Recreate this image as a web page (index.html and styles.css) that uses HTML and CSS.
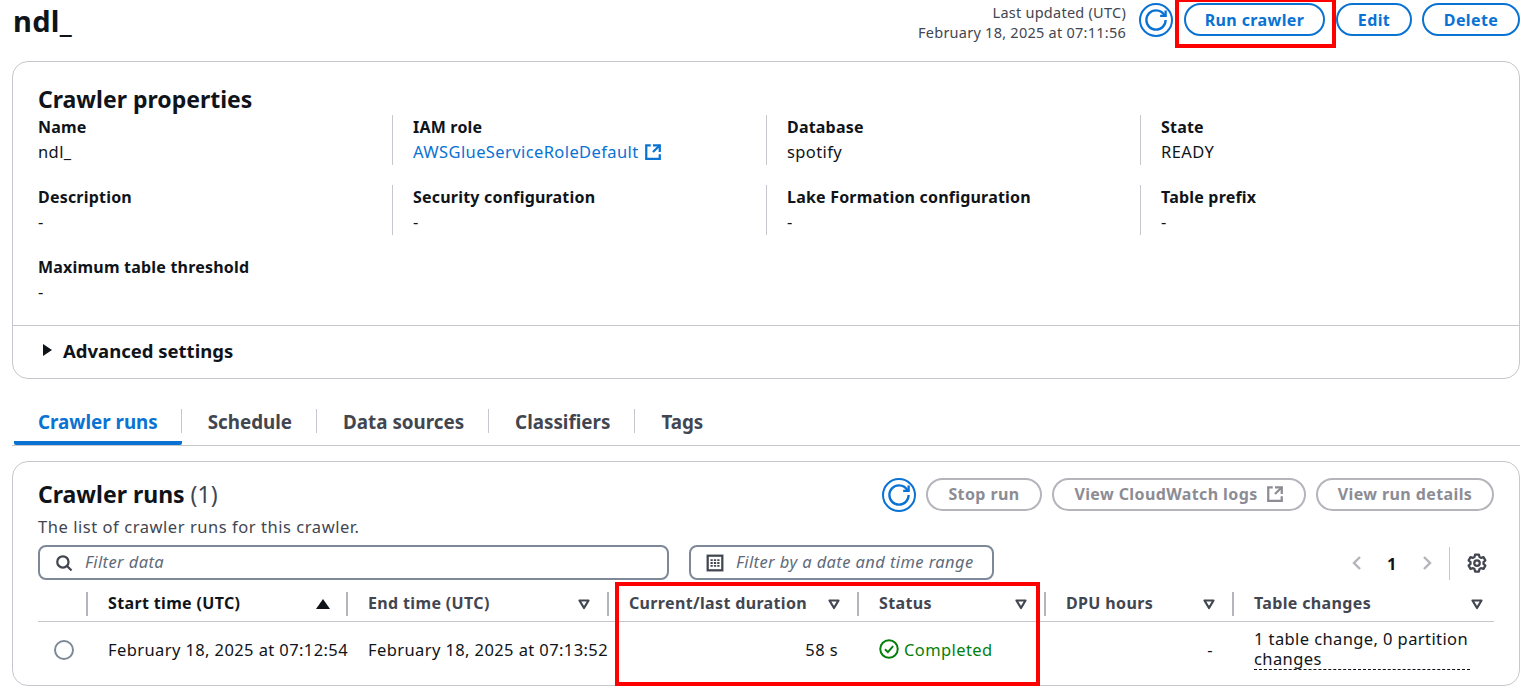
FILE: index.html
```html
<!DOCTYPE html>
<html lang="en">
<head>
<meta charset="UTF-8">
<meta name="viewport" content="width=device-width, initial-scale=1.0">
<link rel="stylesheet" href="styles.css">
<title>ndl_</title>
</head>
<body>
<svg class="sprites" width="0" height="0">
  <symbol id="i-refresh" viewBox="0 0 16 16"><path d="M15 8c0 3.87-3.13 7-7 7s-7-3.13-7-7 3.13-7 7-7c2.79 0 5.2 1.63 6.33 4"/><path d="M15 1v4h-4"/></symbol>
  <symbol id="i-external" viewBox="0 0 16 16"><path d="M14 8.01v-6H8"/><path d="M14.07 2 8 8"/><path d="M6 2.01H2v12h12v-3.99"/></symbol>
  <symbol id="i-filter" viewBox="0 0 16 16"><path d="M3.5 4.5h9L8 12z" stroke-linejoin="round"/></symbol>
</svg>

<header class="page-head">
  <h1 class="page-title">ndl_</h1>
  <div class="page-actions">
    <div class="updated">Last updated (UTC)<br>February 18, 2025 at 07:11:56</div>
    <button class="icon-btn"><svg class="ico"><use href="#i-refresh"/></svg></button>
    <button class="btn btn-run">Run crawler</button>
    <button class="btn btn-edit">Edit</button>
    <button class="btn btn-delete">Delete</button>
  </div>
</header>

<section class="card props">
  <h2 class="card-title">Crawler properties</h2>
  <div class="prop-grid">
    <div class="prop"><div class="prop-label">Name</div><div>ndl_</div></div>
    <div class="prop"><div class="prop-label">IAM role</div><div><a class="link">AWSGlueServiceRoleDefault</a><svg class="ico ico-ext"><use href="#i-external"/></svg></div></div>
    <div class="prop"><div class="prop-label">Database</div><div>spotify</div></div>
    <div class="prop"><div class="prop-label">State</div><div>READY</div></div>
    <div class="prop"><div class="prop-label">Description</div><div>-</div></div>
    <div class="prop"><div class="prop-label">Security configuration</div><div>-</div></div>
    <div class="prop"><div class="prop-label">Lake Formation configuration</div><div>-</div></div>
    <div class="prop"><div class="prop-label">Table prefix</div><div>-</div></div>
    <div class="prop"><div class="prop-label">Maximum table threshold</div><div>-</div></div>
  </div>
  <div class="advanced"><span class="caret"></span>Advanced settings</div>
</section>

<nav class="tabs">
  <div class="tab active">Crawler runs</div>
  <div class="tab">Schedule</div>
  <div class="tab">Data sources</div>
  <div class="tab">Classifiers</div>
  <div class="tab last">Tags</div>
</nav>

<section class="card runs">
  <div class="runs-head">
    <div>
      <h2 class="card-title">Crawler runs <span class="count">(1)</span></h2>
      <p class="runs-desc">The list of crawler runs for this crawler.</p>
    </div>
    <div class="runs-actions">
      <button class="icon-btn"><svg class="ico"><use href="#i-refresh"/></svg></button>
      <button class="btn btn-off btn-stop">Stop run</button>
      <button class="btn btn-off btn-logs">View CloudWatch logs<svg class="ico ico-off"><use href="#i-external"/></svg></button>
      <button class="btn btn-off btn-details">View run details</button>
    </div>
  </div>
  <div class="filters">
    <div class="filter filter-text">
      <svg class="ico ico-gray" viewBox="0 0 16 16"><circle cx="7" cy="7" r="5"/><path d="m10.7 10.7 4 4"/></svg>
      <span>Filter data</span>
    </div>
    <div class="filter filter-date">
      <svg class="ico ico-gray" viewBox="0 0 16 16"><rect x="1.5" y="1.5" width="13" height="13"/><path d="M4 5.5h2M7 5.5h2M10 5.5h2M4 8h2M7 8h2M10 8h2M4 10.5h2M7 10.5h2M10 10.5h2" stroke-width="1.6"/></svg>
      <span>Filter by a date and time range</span>
    </div>
    <div class="pager">
      <svg class="ico ico-pale" viewBox="0 0 16 16"><path d="m11 2-6 6 6 6"/></svg>
      <span class="page-num">1</span>
      <svg class="ico ico-pale" viewBox="0 0 16 16"><path d="m5 2 6 6-6 6"/></svg>
      <span class="pager-sep"></span>
      <svg class="ico ico-gear" viewBox="0 0 16 16"><path d="M6.5 1.2h3l.5 2 1.2.7 2-.6 1.5 2.6-1.5 1.4v1.4l1.5 1.4-1.5 2.6-2-.6-1.2.7-.5 2h-3l-.5-2-1.2-.7-2 .6-1.5-2.6 1.5-1.4V7.3L1.3 5.9l1.5-2.6 2 .6L6 3.2z" stroke-linejoin="round"/><circle cx="8" cy="8" r="2.2"/></svg>
    </div>
  </div>
  <table class="runs-table">
    <thead>
      <tr>
        <th class="col-radio"><span class="th-in"></span></th>
        <th class="col-start"><span class="th-in sorted">Start time (UTC)<span class="sort-up"></span></span></th>
        <th class="col-end"><span class="th-in">End time (UTC)<svg class="ico ico-filter"><use href="#i-filter"/></svg></span></th>
        <th class="col-dur"><span class="th-in">Current/last duration<svg class="ico ico-filter"><use href="#i-filter"/></svg></span></th>
        <th class="col-status"><span class="th-in">Status<svg class="ico ico-filter"><use href="#i-filter"/></svg></span></th>
        <th class="col-dpu"><span class="th-in">DPU hours<svg class="ico ico-filter"><use href="#i-filter"/></svg></span></th>
        <th class="col-changes"><span class="th-in">Table changes<svg class="ico ico-filter"><use href="#i-filter"/></svg></span></th>
      </tr>
    </thead>
    <tbody>
      <tr>
        <td><span class="radio"></span></td>
        <td class="nowrap">February 18, 2025 at 07:12:54</td>
        <td class="nowrap">February 18, 2025 at 07:13:52</td>
        <td class="right">58 s</td>
        <td><span class="status"><svg class="ico ico-ok" viewBox="0 0 16 16"><circle cx="8" cy="8" r="7"/><path d="m4.8 8.2 2.3 2.3 4.2-4.8"/></svg>Completed</span></td>
        <td class="right">-</td>
        <td><span class="changes">1 table change, 0 partition changes</span></td>
      </tr>
    </tbody>
  </table>
</section>

<div class="mark mark-run"></div>
<div class="mark mark-cols"></div>
</body>
</html>
```

FILE: styles.css
```css
* {
  box-sizing: border-box;
}
html, body {
  height: 686px;
  overflow: hidden;
}
body {
  margin: 0;
  padding: 0 8px 0 12px;
  position: relative;
  background: #fff;
  color: #0f141a;
  font-family: "Noto Sans", Arial, sans-serif;
  font-size: 16.5px;
  letter-spacing: .4px;
  line-height: 25px;
}
.sprites {
  position: absolute;
}
.ico {
  width: 16px;
  height: 16px;
  fill: none;
  stroke: currentColor;
  stroke-width: 2;
  flex: none;
}

/* page header */
.page-head {
  display: flex;
  justify-content: space-between;
  height: 61px;
}
.page-title {
  margin: 0;
  padding: 1px 0 0 1px;
  font-size: 29px;
  letter-spacing: .3px;
  line-height: 40px;
  font-weight: 700;
}
.page-actions {
  display: flex;
  align-items: flex-start;
  padding-top: 3px;
}
.updated {
  margin-top: -3px;
  padding-top: 2px;
  margin-right: 13px;
  text-align: right;
  font-size: 14.5px;
  letter-spacing: .25px;
  line-height: 20px;
  color: #424650;
}
.btn {
  height: 33px;
  padding: 0 20px;
  display: inline-flex;
  align-items: center;
  justify-content: center;
  border: 2px solid #0972d3;
  border-radius: 20px;
  background: #fff;
  color: #0972d3;
  font: 700 16px "Noto Sans", Arial, sans-serif;
  letter-spacing: .4px;
  white-space: nowrap;
}
.icon-btn {
  width: 34px;
  height: 34px;
  padding: 0;
  display: inline-flex;
  align-items: center;
  justify-content: center;
  border: 2px solid #0972d3;
  border-radius: 50%;
  background: #fff;
  color: #0972d3;
}
.icon-btn .ico {
  width: 22px;
  height: 22px;
  stroke-width: 1.7;
}
.btn-run {
  width: 141px;
  margin-left: 11px;
}
.btn-edit {
  width: 76px;
  margin-left: 11px;
}
.btn-delete {
  width: 98px;
  margin-left: 10px;
}

/* cards */
.card {
  border: 1px solid #c6c6cd;
  border-radius: 16px;
  background: #fff;
}
.card-title {
  margin: 0;
  font-size: 23px;
  letter-spacing: 0;
  line-height: 30px;
  font-weight: 700;
}
.props {
  height: 318px;
  padding-top: 22px;
}
.props .card-title {
  margin-bottom: 1px;
  padding-left: 25px;
}
.prop-grid {
  display: grid;
  grid-template-columns: repeat(4, 374px);
  grid-auto-rows: 50px;
  row-gap: 20px;
  height: 210px;
  padding-left: 5px;
}
.prop {
  padding-left: 20px;
  border-left: 1px solid #c6c6cd;
}
.prop:nth-child(4n+1) {
  border-left: 0;
}
.prop-label {
  margin-bottom: -1px;
  font-size: 16px;
  font-weight: 700;
  letter-spacing: .2px;
}
.link {
  color: #0972d3;
}
.ico-ext {
  width: 18px;
  height: 18px;
  margin-left: 5px;
  vertical-align: -3px;
  color: #0972d3;
}
.advanced {
  display: flex;
  align-items: center;
  height: 53px;
  padding: 0 0 4px 30px;
  border-top: 1px solid #c6c6cd;
  font-size: 18.5px;
  letter-spacing: 0;
  font-weight: 700;
}
.caret {
  width: 0;
  height: 0;
  margin-right: 11px;
  border-left: 9px solid #0f141a;
  border-top: 6px solid transparent;
  border-bottom: 6px solid transparent;
}

/* tabs */
.tabs {
  display: flex;
  align-items: flex-start;
  height: 67px;
  padding: 21px 0 0 2px;
  border-bottom: 1px solid #c6c6cd;
  margin-bottom: 15px;
}
.tab {
  position: relative;
  height: 45px;
  padding: 10px 25px 0 26px;
  color: #424650;
  font-size: 18.8px;
  letter-spacing: 0;
  font-weight: 700;
  line-height: 25px;
}
.tab::after {
  content: "";
  position: absolute;
  right: 0;
  top: 9px;
  height: 24px;
  border-right: 1px solid #c6c6cd;
}
.tab.last::after {
  display: none;
}
.tab.active {
  padding-left: 24px;
  padding-right: 24px;
  color: #0972d3;
  border-bottom: 4px solid #0972d3;
  border-radius: 2px;
}

/* crawler runs */
.runs {
  height: 225px;
  padding: 16px 25px 0;
  overflow: hidden;
}
.runs-head {
  display: flex;
  justify-content: space-between;
  height: 67px;
}
.runs .card-title {
  padding-top: 1px;
}
.count {
  font-weight: 400;
  color: #424650;
}
.runs-desc {
  margin: 5px 0 0;
  color: #424650;
  letter-spacing: .55px;
}
.runs-actions {
  display: flex;
  gap: 10px;
}
.btn-off {
  padding-bottom: 2px;
  border-color: #b4b4bb;
  color: #8c8c94;
}
.btn-stop {
  width: 116px;
}
.btn-logs {
  width: 254px;
}
.btn-details {
  width: 178px;
}
.ico-off {
  width: 18px;
  height: 18px;
  margin-left: 8px;
}
.filters {
  display: flex;
  align-items: flex-start;
  height: 36px;
}
.filter {
  display: flex;
  align-items: center;
  height: 35px;
  padding-left: 15px;
  border: 2px solid #7d8998;
  border-radius: 8px;
  color: #5f6b7a;
  font-style: italic;
}
.filter span {
  margin-top: -2px;
}
.ico-gray {
  width: 18px;
  height: 18px;
  margin-right: 12px;
  color: #424650;
  stroke-width: 2;
}
.filter-text {
  width: 631px;
}
.filter-date {
  width: 305px;
  margin-left: 20px;
}
.pager {
  display: flex;
  align-items: center;
  height: 36px;
  margin-left: auto;
  padding-right: 7px;
  color: #b4b4bb;
}
.ico-pale {
  width: 16px;
  height: 16px;
  stroke-width: 2.4;
}
.page-num {
  width: 54px;
  text-align: center;
  color: #0f141a;
  font-weight: 700;
}
.pager-sep {
  height: 33px;
  margin: 0 17px 0 14px;
  border-left: 1px solid #c6c6cd;
}
.ico-gear {
  width: 20px;
  height: 20px;
  color: #424650;
  stroke-width: 1.8;
}

/* table */
.runs-table {
  table-layout: fixed;
  width: 1456px;
  border-collapse: collapse;
}
.col-radio { width: 48px; }
.col-start { width: 260px; }
.col-end { width: 261px; }
.col-dur { width: 250px; }
.col-status { width: 187px; }
.col-dpu { width: 188px; }
.col-changes { width: 262px; }
th {
  height: 40px;
  padding: 6px 0 0;
  border-bottom: 1px solid #c6c6cd;
  text-align: left;
  color: #424650;
  font-size: 16px;
  font-weight: 700;
  letter-spacing: .35px;
}
.th-in {
  display: flex;
  align-items: center;
  justify-content: space-between;
  height: 24px;
  padding: 0 15px 0 20px;
  border-left: 2px solid #b4b4bb;
}
.col-changes .th-in {
  padding-right: 9px;
}
.sorted {
  color: #0f141a;
}
.col-radio .th-in {
  border: 0;
}
.ico-filter {
  color: #424650;
  stroke-width: 2.2;
}
.sort-up {
  width: 0;
  height: 0;
  margin-right: 1px;
  border-left: 7px solid transparent;
  border-right: 7px solid transparent;
  border-bottom: 10px solid #0f141a;
}
td {
  height: 56px;
  padding: 0 0 0 22px;
  vertical-align: middle;
}
.nowrap {
  white-space: nowrap;
}
.right {
  padding-right: 19px;
  text-align: right;
}
.radio {
  display: block;
  width: 20px;
  height: 20px;
  margin: 2px 0 0 -6px;
  border: 2px solid #7d8998;
  border-radius: 50%;
}
.status {
  display: flex;
  align-items: center;
  color: #037f0c;
}
.ico-ok {
  width: 20px;
  height: 20px;
  margin-right: 5px;
  stroke-width: 1.6;
}
.changes {
  display: block;
  width: 216px;
  line-height: 20px;
  border-bottom: 1px dashed #0f141a;
}

/* red marks drawn over the screenshot */
.mark {
  position: absolute;
  border: 4px solid #f00;
  pointer-events: none;
}
.mark-run {
  left: 1175px;
  top: -2px;
  width: 161px;
  height: 50px;
}
.mark-cols {
  left: 615px;
  top: 582px;
  width: 425px;
  height: 104px;
}
```
